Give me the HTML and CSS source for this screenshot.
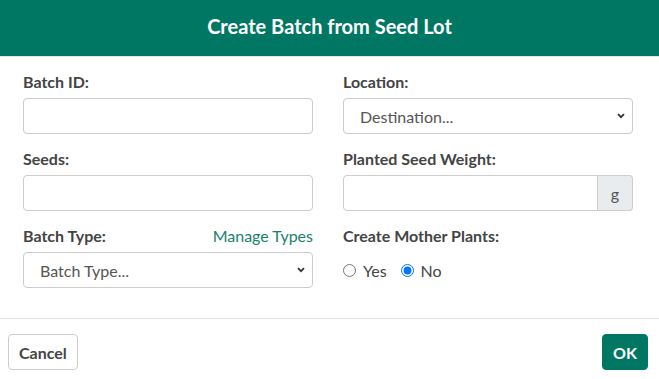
FILE: index.html
```html
<!DOCTYPE html>
<html lang="en">
<head>
    <meta charset="UTF-8">
    <meta name="viewport" content="width=device-width, initial-scale=1.0">
    <title>Create Batch from Seed Lot</title>
    <link rel="stylesheet" href="styles.css">
</head>
<body>

    <div class="modal">
        <!-- Header -->
        <div class="modal-header">Create Batch from Seed Lot</div>

        <!-- Form fields -->
        <div class="modal-body">
            <div class="field">
                <label class="field-label" for="batchId">Batch ID:</label>
                <input class="text-input" type="text" id="batchId">
            </div>
            <div class="field">
                <label class="field-label" for="location">Location:</label>
                <div class="select-wrap">
                    <select class="select-input" id="location">
                        <option>Destination...</option>
                    </select>
                    <svg class="chevron" width="8" height="6" viewBox="0 0 8 6"><path d="M1 1.2 L4 4.2 L7 1.2" fill="none" stroke="#333" stroke-width="1.8"/></svg>
                </div>
            </div>
            <div class="field">
                <label class="field-label" for="seeds">Seeds:</label>
                <input class="text-input" type="text" id="seeds">
            </div>
            <div class="field">
                <label class="field-label" for="weight">Planted Seed Weight:</label>
                <div class="input-group">
                    <input class="text-input" type="text" id="weight">
                    <span class="input-addon">g</span>
                </div>
            </div>
            <div class="field">
                <div class="field-label label-row">
                    <label for="batchType">Batch Type:</label>
                    <a href="#" class="link">Manage Types</a>
                </div>
                <div class="select-wrap">
                    <select class="select-input" id="batchType">
                        <option>Batch Type...</option>
                    </select>
                    <svg class="chevron" width="8" height="6" viewBox="0 0 8 6"><path d="M1 1.2 L4 4.2 L7 1.2" fill="none" stroke="#333" stroke-width="1.8"/></svg>
                </div>
            </div>
            <div class="field">
                <div class="field-label">Create Mother Plants:</div>
                <div class="radio-group">
                    <label class="radio"><input type="radio" name="mother"> Yes</label>
                    <label class="radio"><input type="radio" name="mother" checked> No</label>
                </div>
            </div>
        </div>

        <!-- Footer buttons -->
        <div class="modal-footer">
            <button class="btn btn-default">Cancel</button>
            <button class="btn btn-primary">OK</button>
        </div>
    </div>

</body>
</html>
```

FILE: styles.css
```css
/* Page */
body {
    margin: 0;
    font-family: Lato, "Open Sans", sans-serif;
    background-color: #fff;
    color: #444;
}

/* Modal header */
.modal-header {
    box-sizing: border-box;
    height: 57px;
    padding-bottom: 4px;
    background-color: #007763;
    border-bottom: 1px solid #e5e5e5;
    color: #fff;
    font-size: 20px;
    font-weight: bold;
    display: flex;
    align-items: center;
    justify-content: center;
}

/* Two column form */
.modal-body {
    display: grid;
    grid-template-columns: 290px 290px;
    column-gap: 30px;
    padding: 15px 26px 15px 23px;
}

.field {
    margin-bottom: 15px;
}

.field-label {
    display: block;
    font-size: 16px;
    line-height: 20px;
    font-weight: bold;
    color: #444;
    margin-bottom: 6px;
}

.label-row {
    display: flex;
    justify-content: space-between;
}

.link {
    color: #1a826c;
    font-weight: normal;
    text-decoration: none;
}

/* Inputs */
.text-input,
.select-input {
    box-sizing: border-box;
    width: 100%;
    height: 36px;
    border: 1px solid #ccc;
    border-radius: 4px;
    font-family: inherit;
    font-size: 16px;
    color: #555;
    background-color: #fff;
    outline: none;
}

.text-input {
    padding: 6px 12px;
}

.select-wrap {
    position: relative;
}

.select-input {
    appearance: none;
    padding: 0 30px 0 16px;
}

.chevron {
    position: absolute;
    right: 8px;
    top: 15px;
    pointer-events: none;
}

.input-group {
    display: flex;
}

.input-group .text-input {
    border-radius: 4px 0 0 4px;
}

.input-addon {
    box-sizing: border-box;
    width: 35px;
    height: 36px;
    flex-shrink: 0;
    display: flex;
    align-items: center;
    justify-content: center;
    background-color: #e9ecef;
    border: 1px solid #ccc;
    border-left: none;
    border-radius: 0 4px 4px 0;
    font-size: 16px;
    color: #555;
}

/* Radios */
.radio-group {
    height: 36px;
    display: flex;
    align-items: center;
    gap: 14px;
}

.radio {
    display: flex;
    align-items: center;
    font-size: 16px;
    color: #444;
}

.radio input {
    margin: 0 7px 0 0;
    width: 13px;
    height: 13px;
}

/* Footer */
.modal-footer {
    border-top: 1px solid #e5e5e5;
    padding: 15px 11px 9px 8px;
    display: flex;
    justify-content: space-between;
}

.btn {
    height: 36px;
    padding: 0 10px;
    border-radius: 4px;
    font-family: inherit;
    font-size: 16px;
    font-weight: bold;
    cursor: pointer;
}

.btn-default {
    background-color: #fff;
    border: 1px solid #ccc;
    color: #444;
}

.btn-primary {
    background-color: #007763;
    border: 1px solid #007763;
    color: #fff;
}
```
